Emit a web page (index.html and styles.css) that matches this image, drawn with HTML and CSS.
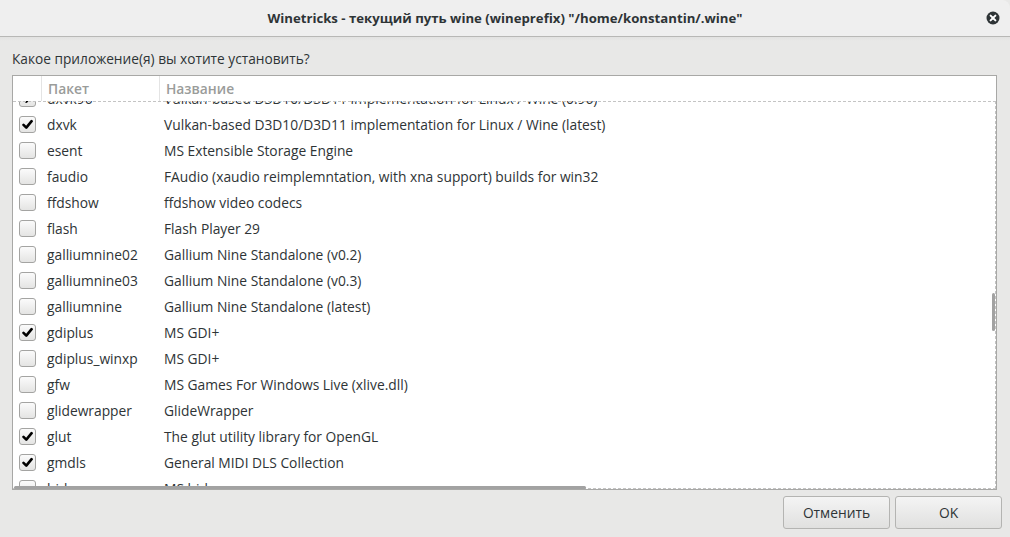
FILE: index.html
```html
<!DOCTYPE html>
<html lang="ru">
<head>
<meta charset="utf-8">
<link rel="stylesheet" href="styles.css">
</head>
<body>
<div class="window">
  <div class="titlebar">
    <div class="title">Winetricks - текущий путь wine (wineprefix) "/home/konstantin/.wine"</div>
    <svg class="close" width="14" height="14" viewBox="0 0 14 14"><circle cx="7" cy="7" r="6.5" fill="#2e3436"/><path d="M4.6 4.6 L9.4 9.4 M9.4 4.6 L4.6 9.4" stroke="#fff" stroke-width="2" stroke-linecap="round"/></svg>
  </div>
  <div class="content">
    <div class="prompt">Какое приложение(я) вы хотите установить?</div>
    <div class="frame">
      <div class="header">
        <div class="hcol hcheck"></div>
        <div class="hcol hpkg">Пакет</div>
        <div class="hcol hname">Название</div>
      </div>
      <div class="listwrap">
        <div class="list">
          <div class="row"><span class="cb on"></span><span class="pkg">dxvk96</span><span class="name">Vulkan-based D3D10/D3D11 implementation for Linux / Wine (0.96)</span></div>
          <div class="row"><span class="cb on"></span><span class="pkg">dxvk</span><span class="name">Vulkan-based D3D10/D3D11 implementation for Linux / Wine (latest)</span></div>
          <div class="row"><span class="cb"></span><span class="pkg">esent</span><span class="name">MS Extensible Storage Engine</span></div>
          <div class="row"><span class="cb"></span><span class="pkg">faudio</span><span class="name">FAudio (xaudio reimplemntation, with xna support) builds for win32</span></div>
          <div class="row"><span class="cb"></span><span class="pkg">ffdshow</span><span class="name">ffdshow video codecs</span></div>
          <div class="row"><span class="cb"></span><span class="pkg">flash</span><span class="name">Flash Player 29</span></div>
          <div class="row"><span class="cb"></span><span class="pkg">galliumnine02</span><span class="name">Gallium Nine Standalone (v0.2)</span></div>
          <div class="row"><span class="cb"></span><span class="pkg">galliumnine03</span><span class="name">Gallium Nine Standalone (v0.3)</span></div>
          <div class="row"><span class="cb"></span><span class="pkg">galliumnine</span><span class="name">Gallium Nine Standalone (latest)</span></div>
          <div class="row"><span class="cb on"></span><span class="pkg">gdiplus</span><span class="name">MS GDI+</span></div>
          <div class="row"><span class="cb"></span><span class="pkg">gdiplus_winxp</span><span class="name">MS GDI+</span></div>
          <div class="row"><span class="cb"></span><span class="pkg">gfw</span><span class="name">MS Games For Windows Live (xlive.dll)</span></div>
          <div class="row"><span class="cb"></span><span class="pkg">glidewrapper</span><span class="name">GlideWrapper</span></div>
          <div class="row"><span class="cb on"></span><span class="pkg">glut</span><span class="name">The glut utility library for OpenGL</span></div>
          <div class="row"><span class="cb on"></span><span class="pkg">gmdls</span><span class="name">General MIDI DLS Collection</span></div>
          <div class="row"><span class="cb"></span><span class="pkg">hid</span><span class="name">MS hid</span></div>
        </div>
      </div>
      <div class="focus"></div>
      <div class="vscroll"></div>
      <div class="hscroll"></div>
    </div>
    <div class="buttons">
      <div class="btn">Отменить</div>
      <div class="btn">OK</div>
    </div>
  </div>
</div>
</body>
</html>
```

FILE: styles.css
```css
html, body {
  margin: 0;
  padding: 0;
}
body {
  width: 1010px;
  height: 537px;
  overflow: hidden;
  background: #e8e8e7;
  font-family: "Open Sans", "DejaVu Sans", sans-serif;
  font-size: 13.8px;
  color: #2e3436;
}
.window {
  display: flex;
  flex-direction: column;
  height: 537px;
}
.titlebar {
  height: 36px;
  border-bottom: 1px solid #b8b8b6;
  background: #efefef;
  border-top-right-radius: 8px;
  display: flex;
  align-items: center;
  justify-content: center;
  position: relative;
}
.title {
  font-weight: bold;
  font-size: 13.2px;
  color: #2e3436;
}
.close {
  position: absolute;
  right: 10px;
  top: 11px;
}
.content {
  flex: 1;
  display: flex;
  flex-direction: column;
  background: linear-gradient(#e2e2e1, #e8e8e7 4px);
}
.prompt {
  padding: 12px 0 0 12px;
  height: 26px;
  line-height: 20px;
  font-size: 13.7px;
}
.frame {
  margin-left: 12px;
  width: 983px;
  height: 413px;
  border: 1px solid #a8a8a6;
  background: #fff;
  position: relative;
  overflow: hidden;
  display: flex;
  flex-direction: column;
}
.header {
  height: 25px;
  display: flex;
  flex-shrink: 0;
}
.hcol {
  line-height: 25px;
  color: #9a9c9a;
  border-right: 1px solid #e4e4e4;
  padding-left: 6px;
  font-weight: 600;
}
.hcheck { width: 22px; padding-left: 6px; }
.hpkg { width: 111px; }
.hname { flex: 1; border-right: none; }
.listwrap {
  flex: 1;
  overflow: hidden;
}
.list {
  margin-top: -16px;
}
.row {
  height: 26px;
  display: flex;
  align-items: center;
}
.cb {
  width: 15px;
  height: 15px;
  margin-left: 6px;
  border: 1px solid #a4a4a2;
  border-radius: 3px;
  background: linear-gradient(#fbfbfb, #e4e4e3);
  flex-shrink: 0;
  position: relative;
}
.cb.on::after {
  content: "";
  position: absolute;
  left: 2px;
  top: 2px;
  width: 11px;
  height: 11px;
  background: url("data:image/svg+xml;utf8,<svg xmlns='http://www.w3.org/2000/svg' width='11' height='11' viewBox='0 0 11 11'><path d='M1.5 5.8 L4.3 8.6 L9.6 2.2' fill='none' stroke='black' stroke-width='2.6' stroke-linecap='round' stroke-linejoin='round'/></svg>") no-repeat;
}
.pkg {
  width: 117px;
  padding-left: 11px;
  flex-shrink: 0;
}
.name {
  white-space: nowrap;
}
.focus {
  position: absolute;
  left: 0;
  top: 25px;
  width: 982px;
  height: 386px;
  border: 1px dashed #c4c4c4;
  border-left: none;
  pointer-events: none;
}
.vscroll {
  position: absolute;
  right: 1px;
  top: 217px;
  width: 3px;
  height: 38px;
  background: #a2a2a2;
  border-radius: 2px;
}
.hscroll {
  position: absolute;
  left: 1px;
  bottom: 0px;
  width: 572px;
  height: 3px;
  background: #a2a2a2;
  border-radius: 2px;
}
.buttons {
  display: flex;
  justify-content: flex-end;
  gap: 5px;
  padding: 6px 8px 0 0;
}
.btn {
  width: 105px;
  height: 31px;
  border: 1px solid #b4b4b2;
  border-radius: 3px;
  background: linear-gradient(#f4f4f4, #e0e0df);
  display: flex;
  align-items: center;
  justify-content: center;
  color: #2e3436;
}
```
